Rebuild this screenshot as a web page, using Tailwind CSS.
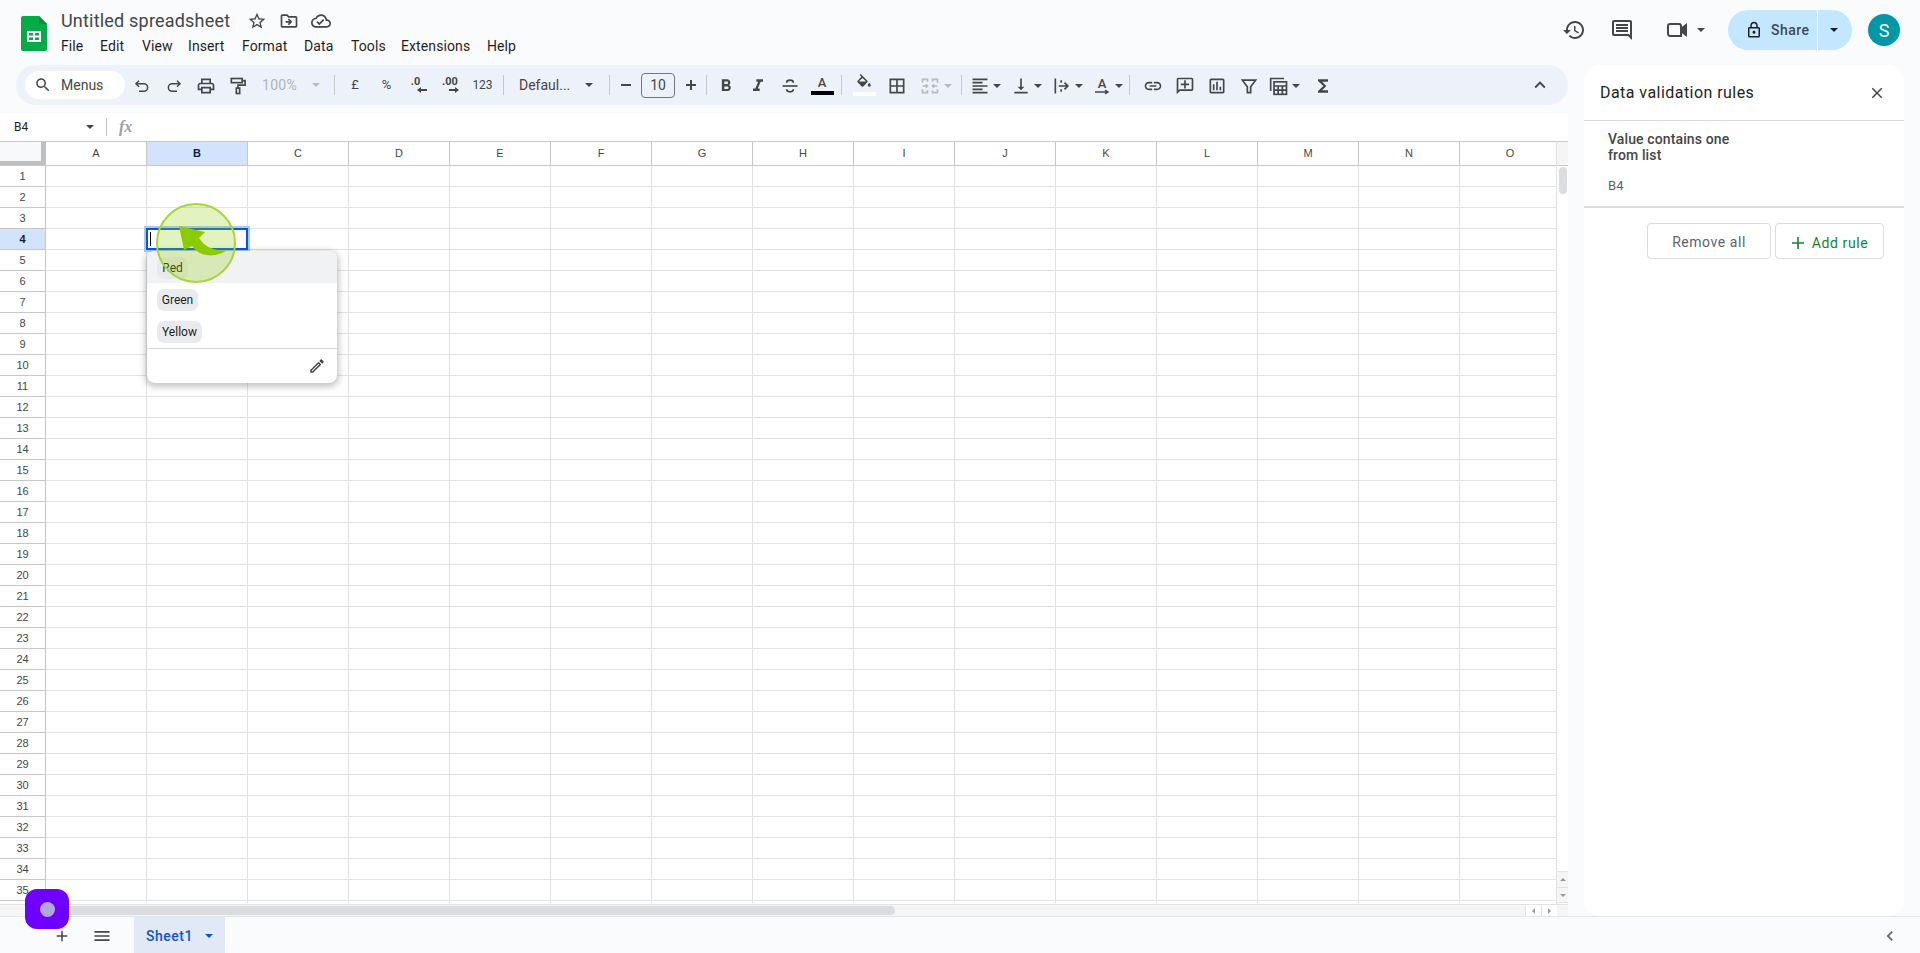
<!doctype html>
<html>
<head>
<meta charset="utf-8">
<script src="https://cdn.jsdelivr.net/npm/@tailwindcss/browser@4"></script>
</head>
<body class="m-0 overflow-hidden">
<div class="relative w-[1920px] h-[953px] flex flex-col overflow-hidden bg-[#f9fbfd] text-[#444746] font-[Roboto,sans-serif]">

  <!-- Top header -->
  <header class="h-[65px] shrink-0 flex items-start">
    <svg class="ml-[21px] mt-[16px] shrink-0" width="26" height="35" viewBox="0 0 26 35"><path d="M2 0h16l8 8v25a2 2 0 0 1-2 2H2a2 2 0 0 1-2-2V2a2 2 0 0 1 2-2z" fill="#00ac47"/><path d="M18 0l8 8h-8z" fill="#0a8a3c"/><path d="M6 15h14v11H6zM8 17v2.500h4V17zM14 17v2.500h4V17zM8 21.500V24h4v-2.500zM14 21.500V24h4v-2.500z" fill="#fff" fill-rule="evenodd"/></svg>
    <div class="ml-[14px] flex flex-col">
      <div class="flex items-center h-[28px] mt-[7px]">
        <span class="text-[18px] leading-[24px] text-[#444746] tracking-[0.2px] w-[183px]">Untitled spreadsheet</span>
        <svg class="ml-[3px]" width="20" height="20" viewBox="0 0 24 24" fill="#444746"><path d="M22 9.240l-7.190-.62L12 2 9.190 8.630 2 9.240l5.460 4.730L5.820 21 12 17.270 18.180 21l-1.630-7.030L22 9.240zM12 15.400l-3.760 2.270 1-4.280-3.320-2.880 4.380-.38L12 6.100l1.710 4.040 4.380.38-3.320 2.880 1 4.280L12 15.400z"/></svg>
        <svg class="ml-[12px]" width="20" height="20" viewBox="0 0 24 24" fill="#444746"><path d="M20 6h-8l-2-2H4c-1.100 0-1.990.9-1.990 2L2 18c0 1.100.9 2 2 2h16c1.100 0 2-.9 2-2V8c0-1.100-.9-2-2-2zm0 12H4V6h5.170l2 2H20v10zm-8.010-9l-1.410 1.410L12.160 12H8v2h4.160l-1.590 1.590L11.990 17 16 13.010 11.990 9z"/></svg>
        <svg class="ml-[12px]" width="20" height="20" viewBox="0 0 24 24" fill="#444746"><path d="M19.350 10.040C18.670 6.590 15.640 4 12 4 9.110 4 6.600 5.640 5.350 8.040 2.340 8.360 0 10.910 0 14c0 3.310 2.690 6 6 6h13c2.760 0 5-2.240 5-5 0-2.640-2.050-4.780-4.650-4.960zM19 18H6c-2.210 0-4-1.790-4-4 0-2.050 1.530-3.760 3.560-3.970l1.070-.11.5-.95C8.080 7.140 9.940 6 12 6c2.620 0 4.880 1.860 5.390 4.430l.3 1.500 1.530.11c1.560.1 2.780 1.410 2.780 2.960 0 1.650-1.350 3-3 3zm-9-3.820l-2.090-2.090L6.500 13.500 10 17l6.010-6.010-1.410-1.410z"/></svg>
      </div>
      <nav class="flex text-[14px] leading-[20px] text-[#1f1f1f] mt-[1px] tracking-[0.1px]">
        <span class="w-[39px]">File</span><span class="w-[42px]">Edit</span><span class="w-[46px]">View</span><span class="w-[54px]">Insert</span><span class="w-[62px]">Format</span><span class="w-[47px]">Data</span><span class="w-[50px]">Tools</span><span class="w-[86px]">Extensions</span><span>Help</span>
      </nav>
    </div>
    <div class="ml-auto flex items-center h-[40px] mt-[10px]">
      <svg width="24" height="24" viewBox="0 0 24 24" fill="#444746"><path d="M13 3c-4.970 0-9 4.030-9 9H1l3.890 3.890.07.14L9 12H6c0-3.870 3.130-7 7-7s7 3.130 7 7-3.130 7-7 7c-1.930 0-3.680-.79-4.940-2.060l-1.420 1.420C8.270 19.990 10.510 21 13 21c4.970 0 9-4.030 9-9s-4.030-9-9-9zm-1 5v5l4.280 2.540.72-1.210-3.500-2.080V8H12z"/></svg>
      <svg class="ml-[24px]" width="24" height="24" viewBox="0 0 24 24" fill="#444746"><path d="M20 2H4c-1.100 0-2 .9-2 2v12c0 1.100.9 2 2 2h14l4 4V4c0-1.100-.9-2-2-2zm0 15.170L18.830 16H4V4h16v13.170zM6 12h12v2H6zM6 9h12v2H6zM6 6h12v2H6z"/></svg>
      <svg class="ml-[31px]" width="24" height="24" viewBox="0 0 24 24" fill="none" stroke="#444746" stroke-width="2"><path d="M5 6h9a2 2 0 0 1 2 2v10H5a2.500 2.500 0 0 1-2-2V8a2 2 0 0 1 2-2z"/><path d="M17 10l4-3v10l-4-3z" fill="#444746"/></svg>
      <span class="ml-[8px] w-0 h-0 border-x-[4px] border-x-transparent border-t-[4px] border-t-[#444746]"></span>
      <div class="ml-[23px] flex h-[40px] w-[124px] rounded-full bg-[#c2e7ff] overflow-hidden">
        <div class="w-[90px] flex items-center border-r border-white pl-[17px]">
          <svg width="18" height="18" viewBox="0 0 24 24" fill="#1f1f1f"><path d="M18 8h-1V6c0-2.760-2.240-5-5-5S7 3.240 7 6v2H6c-1.100 0-2 .9-2 2v10c0 1.100.9 2 2 2h12c1.100 0 2-.9 2-2V10c0-1.100-.9-2-2-2zM9 6c0-1.660 1.340-3 3-3s3 1.340 3 3v2H9V6zm9 14H6V10h12v10zm-6-3c1.100 0 2-.9 2-2s-.9-2-2-2-2 .9-2 2 .9 2 2 2z"/></svg>
          <span class="ml-[8px] text-[14px] font-medium text-[#3c4a55] tracking-[0.5px]">Share</span>
        </div>
        <div class="flex-1 flex items-center justify-center pr-[2px]"><span class="w-0 h-0 border-x-[4px] border-x-transparent border-t-[4px] border-t-[#1f1f1f]"></span></div>
      </div>
      <div class="ml-[16px] mr-[20px] w-[32px] h-[32px] rounded-full bg-[#0097a7] text-white flex items-center justify-center text-[18px]">S</div>
    </div>
  </header>

  <div class="flex-1 flex min-h-0">
    <!-- Main column -->
    <div class="w-[1568px] flex flex-col min-h-0">
      <!-- Toolbar -->
      <div class="ml-[16px] h-[40px] rounded-[20px] bg-[#edf2fa] flex items-center shrink-0 text-[#444746]">
        <div class="ml-[9px] w-[100px] h-[28px] rounded-full bg-white flex items-center pl-[9px] text-[14px]">
          <svg width="18" height="18" viewBox="0 0 24 24" fill="#444746"><path d="M15.500 14h-.79l-.28-.27C15.410 12.590 16 11.110 16 9.500 16 5.910 13.090 3 9.500 3S3 5.910 3 9.500 5.910 16 9.500 16c1.610 0 3.090-.59 4.230-1.570l.27.28v.79l5 4.990L20.490 19l-4.990-5zm-6 0C7.010 14 5 11.990 5 9.500S7.010 5 9.500 5 14 7.010 14 9.500 11.990 14 9.500 14z"/></svg>
          <span class="ml-[9px]">Menus</span>
        </div>
        <div class="ml-[1px] mt-[2px] w-[32px] flex justify-center"><svg width="18" height="18" viewBox="0 0 24 24" fill="none" stroke="#444746" stroke-width="2"><path d="M8 5L4 9l4 4"/><path d="M4 9h10.500a4.500 4.500 0 0 1 0 10H8"/></svg></div>
        <div class="mt-[2px] w-[32px] flex justify-center"><svg width="18" height="18" viewBox="0 0 24 24" fill="none" stroke="#444746" stroke-width="2"><path d="M16 5l4 4-4 4"/><path d="M20 9H9.500a4.500 4.500 0 0 0 0 10H16"/></svg></div>
        <div class="mt-[2px] w-[32px] flex justify-center"><svg width="20" height="20" viewBox="0 0 24 24" fill="#444746"><path d="M19 8h-1V3H6v5H5c-1.660 0-3 1.340-3 3v6h4v4h12v-4h4v-6c0-1.660-1.340-3-3-3zM8 5h8v3H8V5zm8 12v2H8v-4h8v2zm2-2v-2H6v2H4v-4c0-.55.45-1 1-1h14c.55 0 1 .45 1 1v4h-2z"/></svg></div>
        <div class="mt-[2px] w-[32px] flex justify-center"><svg width="20" height="20" viewBox="0 0 24 24" fill="none" stroke="#444746" stroke-width="2"><rect x="4" y="3" width="13" height="5"/><path d="M17 5.500h3.500v5.500H12v3.500"/><rect x="10" y="14.500" width="4" height="6.500"/></svg></div>
        <div class="w-[79px] flex items-center pl-[8px] text-[14px] text-[#b0b3b8] tracking-[0.3px]"><span class="w-[50px]">100%</span><span class="w-0 h-0 border-x-[4px] border-x-transparent border-t-[4px] border-t-[#b8babd]"></span></div>
        <div class="w-px h-[20px] bg-[#c7c7c7] ml-[1px]"></div>
        <div class="w-[32px] ml-[4px] text-center text-[13px]">£</div>
        <div class="w-[31px] text-center text-[13px]">%</div>
        <div class="w-[32px] flex flex-col items-center font-bold text-[11px] leading-[10px]"><span class="-ml-[5px]">.0</span><svg class="ml-[8px]" width="10" height="6" viewBox="0 0 10 6" fill="#444746"><path d="M4 0v2h6v2H4v2L0 3z"/></svg></div>
        <div class="w-[32px] flex flex-col items-center font-bold text-[11px] leading-[10px]"><span>.00</span><svg class="ml-[8px]" width="10" height="6" viewBox="0 0 10 6" fill="#444746"><path d="M6 0v2H0v2h6v2l4-3z"/></svg></div>
        <div class="w-[33px] text-center text-[12px]">123</div>
        <div class="w-px h-[20px] bg-[#c7c7c7] ml-[4px]"></div>
        <div class="w-[105px] flex items-center pl-[15px] text-[14px]"><span class="w-[66px]">Defaul...</span><span class="w-0 h-0 border-x-[4px] border-x-transparent border-t-[4px] border-t-[#444746]"></span></div>
        <div class="w-px h-[20px] bg-[#c7c7c7]"></div>
        <div class="w-[31px] flex justify-center"><span class="w-[10px] h-[2px] bg-[#444746]"></span></div>
        <div class="w-[34px] h-[25px] rounded-[4px] border border-[#747775] text-center text-[14px] leading-[23px]">10</div>
        <div class="w-[31px] flex justify-center"><svg width="12" height="12" viewBox="0 0 12 12" fill="#444746"><path d="M5 1h2v4h4v2H7v4H5V7H1V5h4z"/></svg></div>
        <div class="w-px h-[20px] bg-[#c7c7c7]"></div>
        <div class="ml-[3px] mt-[2px] w-[32px] flex justify-center"><svg width="20" height="20" viewBox="0 0 24 24" fill="#444746"><path d="M15.600 10.790c.97-.67 1.650-1.770 1.650-2.790 0-2.260-1.750-4-4-4H7v14h7.040c2.090 0 3.710-1.700 3.710-3.790 0-1.520-.86-2.820-2.150-3.420zM10 6.500h3c.83 0 1.500.67 1.500 1.500s-.67 1.500-1.500 1.500h-3v-3zm3.500 9H10v-3h3.500c.83 0 1.500.67 1.500 1.500s-.67 1.500-1.500 1.500z"/></svg></div>
        <div class="mt-[2px] w-[32px] flex justify-center"><svg width="20" height="20" viewBox="0 0 24 24" fill="#444746"><path d="M10 4v3h2.210l-3.420 8H6v3h8v-3h-2.210l3.420-8H18V4z"/></svg></div>
        <div class="mt-[2px] w-[32px] flex justify-center"><svg width="20" height="20" viewBox="0 0 24 24" fill="none" stroke="#444746" stroke-width="2"><path d="M3 12h18"/><path d="M16 8c0-2-2-3-4-3s-4 1-4 3M8 16c0 2 2 3 4 3s4-1 4-3"/></svg></div>
        <div class="w-[32px] flex flex-col items-center"><span class="text-[13px] leading-[14px] font-medium">A</span><span class="w-[23px] h-[4px] bg-black mt-[1px]"></span></div>
        <div class="w-px h-[20px] bg-[#c7c7c7] ml-[3px]"></div>
        <div class="ml-[6px] w-[32px] flex flex-col items-center"><svg width="18" height="18" viewBox="0 0 24 24" fill="#444746"><path d="M16.560 8.940L7.620 0 6.210 1.410l2.380 2.380-5.150 5.150c-.59.59-.59 1.540 0 2.120l5.500 5.500c.29.29.68.44 1.060.44s.77-.15 1.060-.44l5.500-5.500c.59-.58.59-1.530 0-2.120zM5.210 10L10 5.210 14.790 10H5.210zM19 11.500s-2 2.170-2 3.500c0 1.100.9 2 2 2s2-.9 2-2c0-1.330-2-3.500-2-3.500z"/></svg><span class="w-[23px] h-[4px] bg-white"></span></div>
        <div class="ml-[1px] mt-[2px] w-[32px] flex justify-center"><svg width="20" height="20" viewBox="0 0 24 24" fill="#444746"><path d="M3 3v18h18V3H3zm8 16H5v-6h6v6zm0-8H5V5h6v6zm8 8h-6v-6h6v6zm0-8h-6V5h6v6z"/></svg></div>
        <div class="ml-[1px] mt-[2px] w-[47px] flex items-center pl-[6px]"><svg width="20" height="20" viewBox="0 0 24 24" fill="none" stroke="#b8babd" stroke-width="2"><path d="M3 8V4h6v3M3 16v4h6v-3M21 8V4h-6v3M21 16v4h-6v-3"/><path d="M3 12h6M7 10l2 2-2 2M21 12h-6M17 10l-2 2 2 2"/></svg><span class="ml-[4px] w-0 h-0 border-x-[4px] border-x-transparent border-t-[4px] border-t-[#b8babd]"></span></div>
        <div class="w-px h-[20px] bg-[#c7c7c7]"></div>
        <div class="ml-[8px] mt-[2px] w-[37px] flex items-center"><svg width="20" height="20" viewBox="0 0 24 24" fill="#444746"><path d="M15 15H3v2h12v-2zm0-8H3v2h12V7zM3 13h18v-2H3v2zm0 8h18v-2H3v2zM3 3v2h18V3H3z"/></svg><span class="ml-[3px] w-0 h-0 border-x-[4px] border-x-transparent border-t-[4px] border-t-[#444746]"></span></div>
        <div class="ml-[4px] mt-[2px] w-[37px] flex items-center"><svg width="20" height="20" viewBox="0 0 24 24" fill="#444746"><path d="M16 13h-3V3h-2v10H8l4 4 4-4zM4 19v2h16v-2H4z"/></svg><span class="ml-[3px] w-0 h-0 border-x-[4px] border-x-transparent border-t-[4px] border-t-[#444746]"></span></div>
        <div class="ml-[4px] mt-[2px] w-[37px] flex items-center"><svg width="20" height="20" viewBox="0 0 24 24" fill="none" stroke="#444746" stroke-width="2"><path d="M4 3v18"/><path d="M8 12h11M15 8l4 4-4 4"/><path d="M11 5v3M11 16v3"/></svg><span class="ml-[3px] w-0 h-0 border-x-[4px] border-x-transparent border-t-[4px] border-t-[#444746]"></span></div>
        <div class="ml-[3px] mt-[2px] w-[37px] flex items-center"><div class="w-[20px] flex flex-col items-center"><span class="text-[13px] leading-[13px] font-medium">A</span><svg class="-mt-[1px]" width="16" height="6" viewBox="0 0 16 6" fill="none" stroke="#444746" stroke-width="1.500"><path d="M1 3h13M11 1l3 2-3 2"/></svg></div><span class="ml-[3px] w-0 h-0 border-x-[4px] border-x-transparent border-t-[4px] border-t-[#444746]"></span></div>
        <div class="w-px h-[20px] bg-[#c7c7c7]"></div>
        <div class="ml-[7px] mt-[2px] w-[32px] flex justify-center"><svg width="20" height="20" viewBox="0 0 24 24" fill="#444746"><path d="M3.900 12c0-1.710 1.390-3.100 3.100-3.100h4V7H7c-2.760 0-5 2.240-5 5s2.240 5 5 5h4v-1.900H7c-1.710 0-3.100-1.390-3.100-3.100zM8 13h8v-2H8v2zm9-6h-4v1.900h4c1.710 0 3.100 1.390 3.100 3.100s-1.390 3.100-3.100 3.100h-4V17h4c2.760 0 5-2.240 5-5s-2.240-5-5-5z"/></svg></div>
        <div class="mt-[2px] w-[32px] flex justify-center"><svg width="20" height="20" viewBox="0 0 24 24" fill="#444746"><path d="M20 2H4c-1.100 0-2 .9-2 2v18l4-4h14c1.100 0 2-.9 2-2V4c0-1.100-.9-2-2-2zm0 14H5.170L4 17.170V4h16v12zM13 5h-2v4H7v2h4v4h2v-4h4V9h-4z"/></svg></div>
        <div class="mt-[2px] w-[32px] flex justify-center"><svg width="20" height="20" viewBox="0 0 24 24" fill="#444746"><path d="M19 3H5c-1.100 0-2 .9-2 2v14c0 1.100.9 2 2 2h14c1.100 0 2-.9 2-2V5c0-1.100-.9-2-2-2zm0 16H5V5h14v14zM7 10h2v7H7zM11 7h2v10h-2zM15 13h2v4h-2z"/></svg></div>
        <div class="mt-[2px] w-[32px] flex justify-center"><svg width="20" height="20" viewBox="0 0 24 24" fill="none" stroke="#444746" stroke-width="2"><path d="M4 5h16l-6 8v7h-4v-7z"/></svg></div>
        <div class="mt-[2px] w-[42px] flex items-center pl-[4px]"><svg width="20" height="20" viewBox="0 0 24 24" fill="none" stroke="#444746" stroke-width="2"><path d="M2 18V3h16"/><rect x="6" y="7" width="15" height="15"/><path d="M6 12h15M6 17h15M11 12v10M16 12v10"/></svg><span class="ml-[3px] w-0 h-0 border-x-[4px] border-x-transparent border-t-[4px] border-t-[#444746]"></span></div>
        <div class="mt-[2px] w-[32px] flex justify-center"><svg width="20" height="20" viewBox="0 0 24 24" fill="#444746"><path d="M18 4H6v2l6.500 6L6 18v2h12v-3h-7l5-5-5-5h7z"/></svg></div>
        <div class="ml-auto mr-[16px] w-[24px] flex justify-center"><svg width="22" height="22" viewBox="0 0 24 24" fill="#444746"><path d="M7.410 15.410L12 10.830l4.590 4.580L18 14l-6-6-6 6z"/></svg></div>
      </div>

      <!-- Formula bar -->
      <div class="mt-[8px] h-[28px] bg-white flex items-center shrink-0 text-[12px] text-[#1f1f1f]">
        <span class="ml-[14px] w-[72px]">B4</span>
        <span class="w-0 h-0 border-x-[4px] border-x-transparent border-t-[4px] border-t-[#444746]"></span>
        <span class="ml-[12px] w-px h-[18px] bg-[#c7c7c7]"></span>
        <span class="ml-[12px] font-['Liberation_Serif',serif] italic font-semibold text-[16px] text-[#9aa0a6]">fx</span>
      </div>

      <!-- Grid -->
      <div class="flex-1 min-h-0 flex flex-col bg-white">
        <div class="flex-1 min-h-0 flex">
          <div class="w-[1556px] overflow-hidden">
            <div id="hdr" class="flex h-[25px] border-y border-[#c7c7c7] text-[11px] text-[#444746] font-['Liberation_Sans',sans-serif] w-[1600px]">
              <div class="w-[46px] shrink-0 bg-[#f8f9fa] border-r-[5px] border-b-[4px] border-[#c0c0c0]"></div>
              <div id="cols" class="flex"></div>
            </div>
            <div id="rows" class="h-[737px] overflow-hidden w-[1600px]"></div>
          </div>
          <div class="w-[12px] border-l border-[#e1e3e3] flex flex-col">
            <div class="h-[25px] bg-[#f5f5f5] border-y border-[#c7c7c7]"></div>
            <div class="h-[705px] relative"><div class="absolute left-[2px] top-[1px] w-[8px] h-[27px] rounded-full bg-[#dadce0]"></div></div>
            <div class="h-[16px] bg-[#f5f5f5] border-t border-[#e1e3e3] flex items-center justify-center"><span class="w-0 h-0 border-x-[3px] border-x-transparent border-b-[3px] border-b-[#9a9a9a]"></span></div>
            <div class="h-[16px] bg-[#f5f5f5] border-y border-[#e1e3e3] flex items-center justify-center"><span class="w-0 h-0 border-x-[3px] border-x-transparent border-t-[3px] border-t-[#9a9a9a]"></span></div>
          </div>
        </div>
        <div class="h-[12px] shrink-0 flex bg-[#f5f5f5] border-t border-[#e1e3e3]">
          <div class="w-[46px]"></div>
          <div class="flex-1 pt-[1px]"><div class="w-[849px] h-[9px] rounded-full bg-[#dadce0]"></div></div>
          <div class="w-[16px] bg-white border-l border-[#e1e3e3] flex items-center justify-center"><span class="w-0 h-0 border-y-[3px] border-y-transparent border-r-[3px] border-r-[#9a9a9a]"></span></div>
          <div class="w-[16px] bg-white border-l border-[#e1e3e3] flex items-center justify-center"><span class="w-0 h-0 border-y-[3px] border-y-transparent border-l-[3px] border-l-[#9a9a9a]"></span></div>
          <div class="w-[11px]"></div>
        </div>
      </div>
    </div>

    <!-- Side panel -->
    <aside class="ml-[16px] w-[320px] bg-white rounded-[16px] flex flex-col">
      <div class="h-[56px] flex items-center pl-[16px] pr-[18px] border-b border-[#dadce0] shrink-0">
        <span class="text-[16px] text-[#1f1f1f] tracking-[0.45px]">Data validation rules</span>
        <svg class="ml-auto" width="18" height="18" viewBox="0 0 24 24" fill="#444746"><path d="M19 6.410L17.590 5 12 10.590 6.410 5 5 6.410 10.590 12 5 17.590 6.410 19 12 13.410 17.590 19 19 17.590 13.410 12z"/></svg>
      </div>
      <div class="h-[87px] pl-[24px] pt-[10px] border-b-[2px] border-[#dadce0] shrink-0">
        <div class="text-[14px] leading-[16px] font-medium text-[#444746] tracking-[0.12px]">Value contains one<br>from list</div>
        <div class="mt-[15px] text-[13px] leading-[16px] text-[#5f6368] tracking-[0.2px]">B4</div>
      </div>
      <div class="flex justify-end pr-[20px] mt-[15px] gap-[4px]">
        <div class="w-[124px] h-[36px] border border-[#dadce0] rounded-[4px] flex items-center justify-center text-[14px] text-[#5f6368] tracking-[0.55px] pt-[3px]">Remove all</div>
        <div class="w-[109px] h-[36px] border border-[#dadce0] rounded-[4px] flex items-center justify-center text-[14px] text-[#188038] tracking-[0.6px] pt-[4px]">
          <svg width="14" height="14" viewBox="0 0 14 14" fill="#188038"><path d="M6.200 1h1.600v5.200H13v1.600H7.800V13H6.200V7.800H1V6.200h5.200z"/></svg>
          <span class="ml-[7px]">Add rule</span>
        </div>
      </div>
    </aside>
  </div>

  <!-- Bottom bar -->
  <footer class="h-[37px] shrink-0 border-t border-[#e1e3e6] flex items-center bg-[#f9fbfd]">
    <svg class="ml-[53px] mt-[2px]" width="18" height="18" viewBox="0 0 24 24" fill="#444746"><path d="M19 13h-6v6h-2v-6H5v-2h6V5h2v6h6z"/></svg>
    <svg class="ml-[21px] mt-[2px]" width="20" height="20" viewBox="0 0 24 24" fill="#444746"><path d="M3 18h18v-2H3zM3 13h18v-2H3zM3 6v2h18V6z"/></svg>
    <div class="ml-[22px] w-[91px] h-full bg-[#e1e9f7] flex items-center pl-[12px] pt-[2px] text-[#0b57d0] text-[14px] font-medium tracking-[0.5px]">
      Sheet1<span class="ml-[12px] w-0 h-0 border-x-[4px] border-x-transparent border-t-[4px] border-t-[#0b57d0]"></span>
    </div>
    <svg class="ml-auto mr-[20px] mt-[2px]" width="20" height="20" viewBox="0 0 24 24" fill="#5f6368"><path d="M15.410 7.410L14 6l-6 6 6 6 1.410-1.410L10.830 12z"/></svg>
  </footer>

  <!-- Selected cell -->
  <div class="absolute left-[144px] top-[226px] w-[106px] h-[26px] border-2 border-[#a8c7fa]"><div class="w-full h-full border-2 border-[#0b57d0] pl-[2px] pt-[2px]"><div class="w-px h-[14px] bg-black"></div></div></div>

  <!-- Dropdown -->
  <div class="absolute left-[147px] top-[251px] w-[190px] h-[132px] bg-white rounded-[8px] shadow-[0_2px_6px_2px_rgba(60,64,67,0.3)] overflow-hidden text-[12px] text-[#1f1f1f]">
    <div class="h-[32px] bg-[#f1f2f4] pl-[10px] flex items-center"><span class="mt-[2px] h-[22px] w-[31px] rounded-[7px] bg-[#e9eaed] flex items-center justify-center">Red</span></div>
    <div class="h-[32px] pl-[10px] flex items-center"><span class="mt-[2px] h-[22px] w-[41px] rounded-[7px] bg-[#e9eaed] flex items-center justify-center">Green</span></div>
    <div class="h-[32px] pl-[10px] flex items-center"><span class="mt-[2px] h-[22px] w-[45px] rounded-[7px] bg-[#e9eaed] flex items-center justify-center">Yellow</span></div>
    <div class="mt-[1px] border-t border-[#dadce0] h-[35px] flex items-center justify-end pr-[11px]">
      <svg width="18" height="18" viewBox="0 0 24 24" fill="#444746"><path d="M14.060 9.020l.92.92L5.920 19H5v-.92l9.060-9.060M17.660 3c-.25 0-.51.1-.7.29l-1.830 1.830 3.750 3.750 1.830-1.830c.39-.39.39-1.020 0-1.410l-2.340-2.340c-.2-.2-.45-.29-.71-.29zm-3.600 3.190L3 17.250V21h3.750L17.810 9.940l-3.750-3.750z"/></svg>
    </div>
  </div>

  <!-- Green highlight + arrow -->
  <div class="absolute left-[156px] top-[203px] w-[80px] h-[80px] rounded-full bg-[#8fce00]/25 border-2 border-[#a5d63f]"></div>
  <svg class="absolute left-[170px] top-[220px]" width="70" height="44" viewBox="170 220 70 44"><path d="M179 226l26 6-6 6c5 8 12 12 27 13-12 7-26 6-34-5l-8 4z" fill="#8ccb00"/></svg>

  <!-- Purple launcher -->
  <div class="absolute left-[25px] top-[889px] w-[44px] h-[40px] rounded-[12px] bg-[#6f00ff] flex items-center justify-center"><span class="w-[15px] h-[15px] rounded-full bg-[#b1a8de]"></span></div>
</div>

<script>
  var letters = "ABCDEFGHIJKLMNO".split("");
  var cols = document.getElementById("cols");
  letters.forEach(function (l, i) {
    var d = document.createElement("div");
    d.className = i === 1
      ? "w-[101px] shrink-0 border-r border-[#c7c7c7] bg-[#d3e3fd] font-bold text-[#0b1f3a] text-center leading-[23px]"
      : "w-[101px] shrink-0 border-r border-[#c7c7c7] text-center leading-[23px]";
    d.textContent = l;
    cols.appendChild(d);
  });
  var rows = document.getElementById("rows");
  for (var r = 1; r <= 36; r++) {
    var row = document.createElement("div");
    row.className = "flex h-[21px]";
    var h = document.createElement("div");
    h.className = r === 4
      ? "w-[46px] shrink-0 border-r border-b border-[#c7c7c7] bg-[#d3e3fd] font-bold text-[#0b1f3a] text-[11px] text-center leading-[20px] font-['Liberation_Sans',sans-serif]"
      : "w-[46px] shrink-0 border-r border-b border-[#c7c7c7] text-[#444746] text-[11px] text-center leading-[20px] font-['Liberation_Sans',sans-serif]";
    if (r <= 35) h.textContent = r;
    row.appendChild(h);
    for (var c = 0; c < 15; c++) {
      var cell = document.createElement("div");
      cell.className = "w-[101px] shrink-0 border-r border-b border-[#e1e3e3]";
      row.appendChild(cell);
    }
    rows.appendChild(row);
  }
</script>
</body>
</html>
